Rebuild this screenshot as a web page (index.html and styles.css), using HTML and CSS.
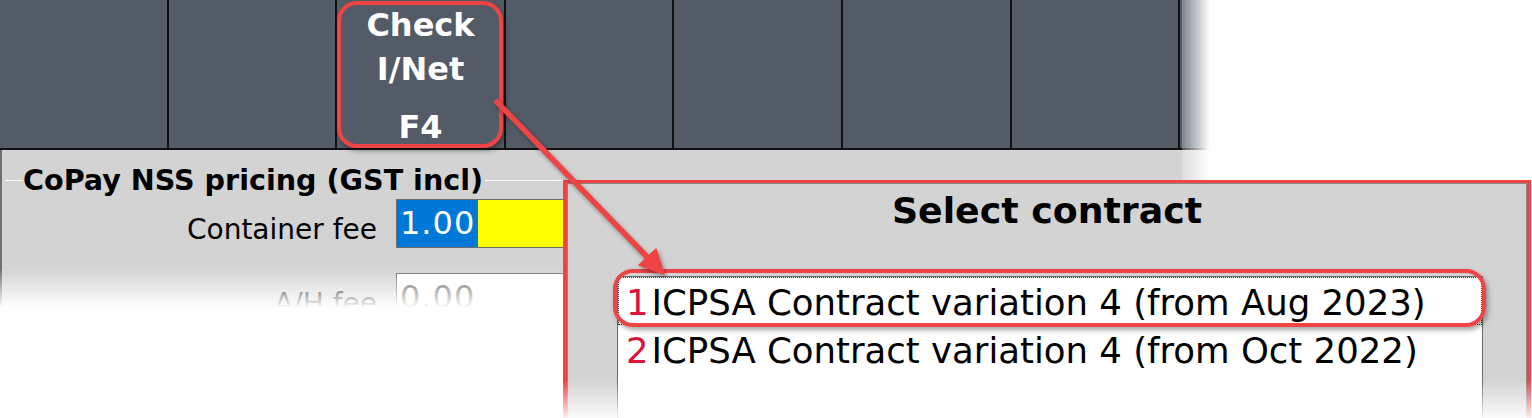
FILE: index.html
```html
<!DOCTYPE html>
<html lang="en">
<head>
<meta charset="utf-8">
<title>Select contract</title>
<link rel="stylesheet" href="styles.css">
</head>
<body>
<div class="stage">
  <div class="app">
    <div class="toolbar">
      <div class="tb-cell"></div>
      <div class="tb-cell"></div>
      <div class="tb-cell tb-btn">
        <div class="tb-label">Check<br>I/Net</div>
        <div class="tb-key">F4</div>
      </div>
      <div class="tb-cell"></div>
      <div class="tb-cell"></div>
      <div class="tb-cell"></div>
      <div class="tb-cell"></div>
      <div class="tb-cell"></div>
    </div>
    <div class="panel">
      <div class="group-head"><span class="group-title">CoPay NSS pricing (GST incl)</span></div>
      <div class="field">
        <div class="field-label">Container fee</div>
        <div class="input input-active"><span class="sel">1.00</span></div>
      </div>
      <div class="field field-2">
        <div class="field-label">A/H fee</div>
        <div class="input"><span class="val">0.00</span></div>
      </div>
    </div>
    <div class="fade-bottom"></div>
    <div class="fade-right"></div>
  </div>

  <div class="dialog">
    <div class="dialog-inner">
      <div class="dialog-title">Select contract</div>
      <div class="listbox">
        <div class="row focus"><span class="num">1</span>ICPSA Contract variation 4 (from Aug 2023)</div>
        <div class="row"><span class="num">2</span>ICPSA Contract variation 4 (from Oct 2022)</div>
        <div class="ring ring-row"></div>
      </div>
    </div>
    <div class="dialog-fade"></div>
  </div>

  <div class="ring ring-btn"></div>

  <svg class="arrow" width="1532" height="418" viewBox="0 0 1532 418" aria-hidden="true">
    <line x1="497" y1="102" x2="650" y2="260" stroke="#ef4444" stroke-width="5.5" stroke-linecap="round"/>
    <polygon points="664,274 656,249 639,265" fill="#ef4444" stroke="#ef4444" stroke-width="1.5" stroke-linejoin="round"/>
  </svg>
</div>
</body>
</html>
```

FILE: styles.css
```css
html, body {
  margin: 0;
  padding: 0;
}

body {
  width: 1532px;
  height: 418px;
  overflow: hidden;
  background: #ffffff;
  font-family: "DejaVu Sans", Verdana, sans-serif;
  color: #000;
}

.stage {
  position: relative;
  width: 1532px;
  height: 418px;
  overflow: hidden;
}

/* ---------- base application window ---------- */
.app {
  position: relative;
  width: 1215px;
  height: 418px;
  display: flex;
  flex-direction: column;
}

.toolbar {
  display: grid;
  grid-template-columns: repeat(7, 168.6px) 1fr;
  height: 150px;
  box-sizing: border-box;
  background: #525b66;
  border-bottom: 2px solid #111;
}

.tb-cell {
  border-right: 2px solid #111;
}

.tb-cell:last-child {
  border-right: none;
}

.tb-btn {
  display: flex;
  flex-direction: column;
  align-items: center;
  color: #fff;
  font-weight: bold;
  font-size: 32px;
}

.tb-label {
  padding-top: 3px;
  line-height: 44px;
  text-align: center;
}

.tb-key {
  margin-top: auto;
  line-height: 42px;
}

.panel {
  flex: 1;
  background: #d3d3d3;
  border-left: 2px solid #707070;
  padding-top: 14px;
}

.group-head {
  display: flex;
  align-items: center;
  padding-left: 3px;
  font-weight: bold;
  font-size: 28.6px;
  line-height: 32px;
}

.group-head::before {
  content: "";
  width: 18px;
  height: 1px;
  background: #ffffff;
}

.group-head::after {
  content: "";
  flex: 1;
  height: 1px;
  margin-left: 2px;
  background: #ffffff;
}

.field {
  display: flex;
  margin-top: 3px;
}

.field-2 {
  margin-top: 25px;
}

.field-label {
  width: 375px;
  box-sizing: border-box;
  padding-top: 15px;
  text-align: right;
  font-size: 28px;
  line-height: 32px;
}

.input {
  margin-left: 19px;
  width: 320px;
  height: 49px;
  box-sizing: border-box;
  border: 1px solid #6d6d6d;
  background: #ffffff;
  font-size: 32px;
  line-height: 47px;
  white-space: nowrap;
}

.input-active {
  background: #ffff00;
}

.sel {
  display: inline-block;
  height: 47px;
  padding: 0 3px;
  background: #0078d7;
  color: #ffffff;
  letter-spacing: 1px;
}

.val {
  padding-left: 3px;
  color: #555;
  letter-spacing: 1px;
}

.fade-bottom {
  position: absolute;
  left: 0;
  right: 0;
  top: 268px;
  bottom: 0;
  background: linear-gradient(to bottom, rgba(255, 255, 255, 0) 0, #ffffff 40px);
}

.fade-right {
  position: absolute;
  top: 0;
  bottom: 0;
  left: 1182px;
  right: 0;
  background: linear-gradient(to right, rgba(255, 255, 255, 0.25) 0, #ffffff 28px);
}

/* ---------- dialog ---------- */
.dialog {
  position: absolute;
  left: 563px;
  top: 180px;
  width: 968px;
  height: 260px;
  box-sizing: border-box;
  border: 4px solid #ef4444;
  border-top-width: 3px;
}

.dialog-inner {
  height: 100%;
  box-sizing: border-box;
  border: 1px solid #8a8a8a;
  background: #d3d3d3;
}

.dialog-title {
  padding-top: 5px;
  text-align: center;
  font-weight: bold;
  font-size: 36.3px;
  line-height: 44px;
}

.listbox {
  position: relative;
  margin: 43px 0 0 49px;
  width: 866px;
  height: 200px;
  box-sizing: border-box;
  border: 1px solid #6a6a6a;
  background: #ffffff;
}

.row {
  height: 48px;
  padding-left: 8px;
  font-size: 35.5px;
  line-height: 52px;
  white-space: nowrap;
}

.row.focus {
  outline: 1px dotted #333;
  outline-offset: -1px;
}

.num {
  color: #dc143c;
  margin-right: 3px;
}

.dialog-fade {
  position: absolute;
  left: -4px;
  right: -4px;
  top: 197px;
  bottom: -4px;
  background: linear-gradient(to bottom, rgba(255, 255, 255, 0) 0, rgba(255, 255, 255, 0.95) 40px);
}

/* ---------- annotations ---------- */
.ring {
  position: absolute;
  box-sizing: border-box;
  border: 4px solid #ef4444;
  border-radius: 20px;
  box-shadow: 2px 3px 5px rgba(0, 0, 0, 0.35);
  pointer-events: none;
}

.ring-row {
  left: -5px;
  top: -8px;
  width: 873px;
  height: 58px;
}

.ring-btn {
  left: 337px;
  top: 1px;
  width: 166px;
  height: 147px;
}

.arrow {
  position: absolute;
  left: 0;
  top: 0;
  pointer-events: none;
  filter: drop-shadow(2px 3px 2px rgba(0, 0, 0, 0.35));
}
```
